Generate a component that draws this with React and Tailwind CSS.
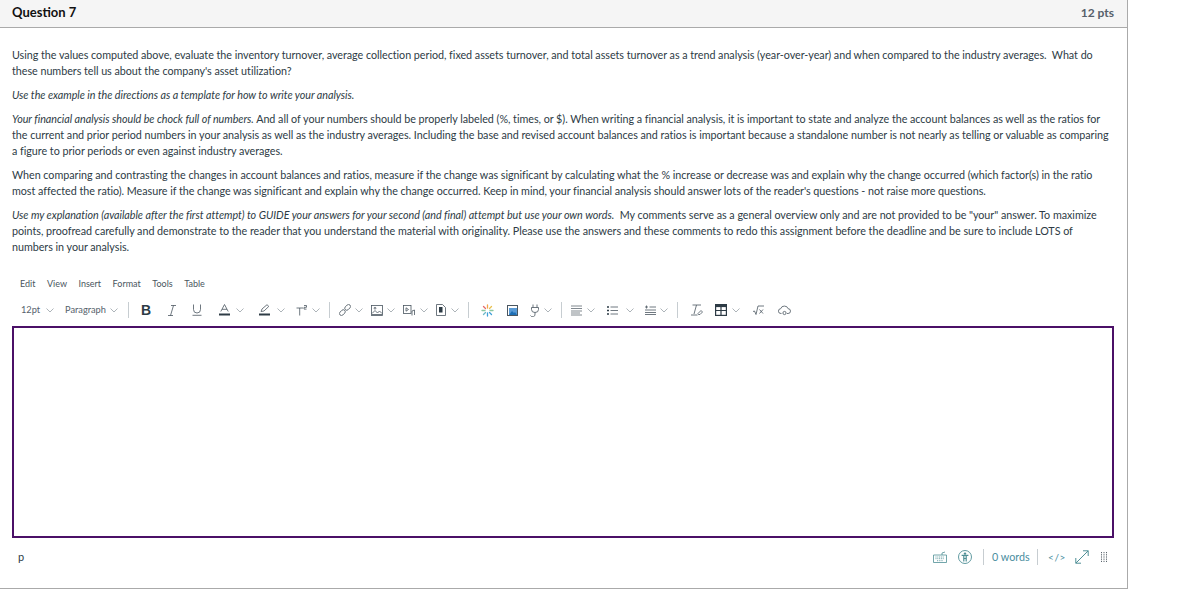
const C = ({ x = 0 }) => (
  <svg width="8" height="5" viewBox="0 0 8 5" className="shrink-0" fill="none" stroke="#8a949b" strokeWidth="0.7" style={{ marginLeft: x }}>
    <path d="M0.5 0.5 L4 4 L7.5 0.5" />
  </svg>
);
const Sep = ({ x = 0 }) => <div className="w-px h-4 bg-[#c7cdd1] shrink-0" style={{ marginLeft: x }} />;
const I = ({ w = 14, h = 14, children, sw = 1, stroke = "#4a5660", x = 0 }) => (
  <svg width={w} height={h} viewBox={`0 0 ${w} ${h}`} fill="none" stroke={stroke} strokeWidth={sw} className="shrink-0" style={{ marginLeft: x }}>
    {children}
  </svg>
);
const paraCls = "m-0 mb-2";
const teal = "#4f8f96";
const blue = "#4a8ea0";

export default function App() {
  return (
    <div className="w-[1196px] h-[601px] bg-white overflow-hidden font-['Lato','Noto_Sans',sans-serif] text-[#2d3b45]">
      <div className="w-[1128px] h-[589px] border-r border-b border-[#aaaaaa] flex flex-col">
        <div className="h-[28px] shrink-0 bg-[#f5f5f5] border-b border-[#aaaaaa] flex items-center justify-between pl-3 pr-[13px] pb-[2px]">
          <span className="text-[13px] font-bold text-[#111]">Question 7</span>
          <span className="text-[12px] font-bold text-[#56606a]">12 pts</span>
        </div>
        <div className="pl-3 pt-[19px] text-[10.75px] leading-4 tracking-[-0.003em] whitespace-nowrap text-[#2d3b45]">
          <p className={paraCls}>Using the values computed above, evaluate the inventory turnover, average collection period, fixed assets turnover, and total assets turnover as a trend analysis (year-over-year) and when compared to the industry averages.&nbsp; What do<br />these numbers tell us about the company's asset utilization?</p>
          <p className={paraCls}><em>Use the example in the directions as a template for how to write your analysis.</em></p>
          <p className={paraCls}><em>Your financial analysis should be chock full of numbers.</em> And all of your numbers should be properly labeled (%, times, or $). When writing a financial analysis, it is important to state and analyze the account balances as well as the ratios for<br />the current and prior period numbers in your analysis as well as the industry averages. Including the base and revised account balances and ratios is important because a standalone number is not nearly as telling or valuable as comparing<br />a figure to prior periods or even against industry averages.</p>
          <p className={paraCls}>When comparing and contrasting the changes in account balances and ratios, measure if the change was significant by calculating what the % increase or decrease was and explain why the change occurred (which factor(s) in the ratio<br />most affected the ratio). Measure if the change was significant and explain why the change occurred. Keep in mind, your financial analysis should answer lots of the reader's questions - not raise more questions.</p>
          <p className="m-0"><em>Use my explanation (available after the first attempt) to GUIDE your answers for your second (and final) attempt but use your own words.</em>&nbsp; My comments serve as a general overview only and are not provided to be "your" answer. To maximize<br />points, proofread carefully and demonstrate to the reader that you understand the material with originality. Please use the answers and these comments to redo this assignment before the deadline and be sure to include LOTS of<br />numbers in your analysis.</p>
        </div>

        <div className="pl-5 mt-[22px] h-[14px] flex items-center gap-[11.5px] text-[9px] text-[#4a5660]">
          <span>Edit</span><span>View</span><span>Insert</span><span>Format</span><span>Tools</span><span>Table</span>
        </div>

        <div className="mt-[7px] h-[24px] pl-[21px] flex items-center text-[9.25px] text-[#56626c]">
          <span className="w-[20px]">12pt</span><C x={5} />
          <span className="ml-[11px] w-[41px]">Paragraph</span><C x={4} />
          <Sep x={10} />
          <span className="ml-[12px] w-[10px] text-[14px] font-bold leading-none text-[#2d3b45] font-['Liberation_Sans',sans-serif]">B</span>
          <I w={8} h={11} x={17} sw={0.8}><path d="M3 0.5 H8 M0 10.5 H5 M5.5 0.5 L2.5 10.5" /></I>
          <I w={10} h={12} x={16} sw={0.8}><path d="M1.5 0.5 V5.5 a3.5 3.5 0 0 0 7 0 V0.5 M0.5 11.3 H9.5" /></I>
          <I w={11} h={12} x={17} sw={0.8}><path d="M1.8 7.5 L5.5 0.5 L9.2 7.5 M3 5.3 H8" /><path d="M0 10.5 H11" strokeWidth="2" stroke="#2d3b45" /></I>
          <C x={6} />
          <I w={11} h={12} x={15} sw={0.8}><path d="M2 7.5 L3 5 L8 0.7 L9.8 2.4 L5 7 Z" /><path d="M0 10.5 H11" strokeWidth="2" stroke="#2d3b45" /></I>
          <C x={7} />
          <I w={11} h={11} x={11} sw={0.8}><path d="M0.5 3 H7 M3.7 3 V10.5" /><path d="M8 0.5 H10.5 V2.3 H8 V4.1 H10.5" strokeWidth="0.8" /></I>
          <C x={5} />
          <Sep x={9} />
          <I w={12} h={12} x={9} sw={0.8}><g transform="rotate(-45 6 6)"><rect x="-1" y="4" width="6.5" height="4" rx="2" /><rect x="6.5" y="4" width="6.5" height="4" rx="2" /></g></I>
          <C x={4} />
          <I w={12} h={11} x={8} sw={0.8}><rect x="0.5" y="0.5" width="11" height="10" /><path d="M1 8.5 L4 5.5 L6.5 8 L8.5 6 L11 8.5 M1 9.5 H11" /><circle cx="4" cy="3.2" r="0.9" /></I>
          <C x={4} />
          <I w={12} h={11} x={8} sw={0.8}><rect x="0.5" y="0.5" width="7.5" height="8" /><path d="M3 2.8 L5.5 4.5 L3 6.2 Z" /><path d="M9 6 L11.5 5 V10 M9 6 V10.5" /></I>
          <C x={5} />
          <I w={10} h={12} x={8} sw={0.8}><path d="M0.5 0.5 H6.5 L9.5 3.5 V11.5 H0.5 Z" /><rect x="3" y="3" width="3.5" height="5.5" fill="#2d3b45" stroke="none" /></I>
          <C x={5} />
          <Sep x={9} />
          <svg width="13" height="13" viewBox="0 0 13 13" className="shrink-0 ml-[12px]" strokeWidth="1.3" strokeLinecap="round">
            <path d="M6.5 1 V4" stroke="#f3a64a" /><path d="M6.5 9 V12" stroke="#3f9fd8" />
            <path d="M1 6.5 H4" stroke="#8bc7a0" /><path d="M9 6.5 H12" stroke="#8bc7a0" />
            <path d="M2.5 2.5 L4.5 4.5" stroke="#e46a6a" /><path d="M8.5 8.5 L10.5 10.5" stroke="#3f9fd8" />
            <path d="M10.5 2.5 L8.5 4.5" stroke="#e9c04d" /><path d="M4.5 8.5 L2.5 10.5" stroke="#6bb8c9" />
          </svg>
          <svg width="11" height="11" viewBox="0 0 11 11" className="shrink-0 ml-[13px]">
            <rect x="0.5" y="0.5" width="10" height="10" fill="none" stroke="#4a5660" />
            <rect x="2" y="3" width="8" height="7" fill="#5a9bd6" />
            <path d="M2 10 L5 6 L7 8 L8 7 L10 10 Z" fill="#1e6fb5" />
          </svg>
          <I w={11} h={13} x={11} sw={0.8}><path d="M4 0.5 V3.5 M8 0.5 V3.5 M2.5 3.5 H9.5 V5.5 a3.5 3 0 0 1 -7 0 Z M6 8.5 V10 a2.4 2.4 0 0 1 -4.5 1.5" /></I>
          <C x={4} />
          <Sep x={9} />
          <I w={11} h={11} x={9} sw={0.7}><path d="M0 1 H11 M0 3.5 H11 M0 6 H11 M0 8 H9 M0 10 H11" /></I>
          <C x={5} />
          <I w={11} h={9} x={12} sw={0.8}><path d="M3.5 1 H11 M3.5 4.5 H11 M3.5 8 H11" /><path d="M0 1 H2 M0 4.5 H2 M0 8 H2" strokeWidth="1.4" stroke="#2d3b45" /></I>
          <C x={8} />
          <I w={11} h={10} x={11} sw={0.8}><path d="M4.5 2 H11 M0 5 H11 M0 7.5 H11 M0 9.5 H11 M0 2 H3 M1.5 0.5 V3.5" /></I>
          <C x={4} />
          <Sep x={9} />
          <I w={12} h={12} x={13} sw={0.8}><path d="M1.5 1 H10 M5.5 1 L3 10 M0 11 H6.5" /><path d="M7 9.5 L10 6.5 L11.5 8 L9 10.5 H7.5 Z" /></I>
          <I w={12} h={12} x={12} sw={1.2} stroke="#2d3b45"><rect x="0.6" y="0.6" width="10.8" height="10.8" /><path d="M0.6 6.5 H11.4 M6 2 V11.4" /><path d="M0.6 2 H11.4" strokeWidth="2.2" /></I>
          <C x={5} />
          <I w={11} h={10} x={13} sw={0.8}><path d="M0 6.5 L1.5 6 L3 9.5 L5 1 H11 M6.5 4.5 L10 8.5 M10 4.5 L6.5 8.5" /></I>
          <I w={13} h={11} x={14} sw={0.8}><path d="M3.5 8.5 H3 a2.4 2.4 0 0 1 -0.3 -4.8 a3.8 3.4 0 0 1 7.4 0 a2.4 2.4 0 0 1 0 4.8 H9" /><circle cx="6.5" cy="8" r="1.6" /></I>
        </div>

        <div className="mt-[4px] ml-3 w-[1102px] h-[212px] border-2 border-[#4b1067] shrink-0" />

        <div className="mt-[9px] h-[20px] pl-[18px] pr-[20px] flex items-center justify-between">
          <span className="text-[11px] text-[#2d3b45]">p</span>
          <div className="flex items-center">
            <I w={14} h={12} stroke={teal} sw={0.8}><path d="M0.5 4 H13.5 V11.5 H0.5 Z M9 4 V2 L12 1" /><path d="M2.5 6 H11.5 M2.5 7.7 H11.5 M4 9.7 H10" strokeDasharray="1 0.8" /></I>
            <I w={14} h={14} x={11} stroke={teal} sw={0.9}><circle cx="7" cy="7" r="6.5" /><circle cx="7" cy="3.6" r="1.2" fill={teal} stroke="none" /><path d="M3.6 5.3 H10.4 M5.8 5.5 V11.5 M8.2 5.5 V11.5 M5.8 8.5 H8.2" strokeWidth="1.2" /></I>
            <Sep x={11} />
            <span className="ml-2 w-[37px] text-[10.75px] whitespace-nowrap" style={{ color: blue }}>0 words</span>
            <Sep x={8} />
            <span className="ml-[10px] w-[17px] text-[10px] whitespace-nowrap tracking-[0.6px]" style={{ color: blue }}>&lt;/&gt;</span>
            <I w={14} h={14} x={10} stroke={teal} sw={1}><path d="M0.8 13.2 L13.2 0.8 M8 0.8 H13.2 V6 M0.8 8 V13.2 H6" /></I>
            <svg width="6" height="11" viewBox="0 0 6 11" className="shrink-0 ml-[12px]" fill="#5a646c">
              {[0, 2.2, 4.4, 6.6, 8.8].flatMap((y) => [0, 2.5, 5].map((x) => <rect key={`${x}-${y}`} x={x} y={y} width="1" height="1.2" />))}
            </svg>
          </div>
        </div>
      </div>
    </div>
  );
}
